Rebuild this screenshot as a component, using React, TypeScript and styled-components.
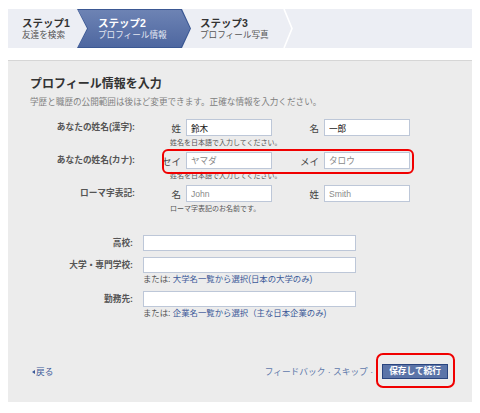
import styled, { createGlobalStyle } from "styled-components";

const GlobalStyle = createGlobalStyle`
  body {
    margin: 8px;
    background: #ffffff;
    font-family: "Liberation Sans", "Noto Sans CJK JP", sans-serif;
    color: #333;
  }
`;

const steps = [
  { title: "ステップ1", sub: "友達を検索" },
  { title: "ステップ2", sub: "プロフィール情報" },
  { title: "ステップ3", sub: "プロフィール写真" },
];

export default function App() {
  return (
    <>
      <GlobalStyle />
      <StepBar>
        <Step $width={69} $pad={14}>
          <StepTitle>{steps[0].title}</StepTitle>
          <StepSub>{steps[0].sub}</StepSub>
        </Step>
        <ActiveStep>
          <ActiveInner>
            <StepTitle $active>{steps[1].title}</StepTitle>
            <StepSub $active>{steps[1].sub}</StepSub>
          </ActiveInner>
        </ActiveStep>
        <Step $width={92} $pad={9}>
          <StepTitle>{steps[2].title}</StepTitle>
          <StepSub>{steps[2].sub}</StepSub>
        </Step>
        <Chevron width="10" height="39" viewBox="0 0 10 39">
          <polyline points="1,0 9,19.5 1,39" fill="none" stroke="#ffffff" strokeWidth="1.6" />
        </Chevron>
      </StepBar>

      <Panel>
        <Heading>プロフィール情報を入力</Heading>
        <Intro>学歴と職歴の公開範囲は後ほど変更できます。正確な情報を入力ください。</Intro>

        <NameSection>
          <NameRow>
            <Label>あなたの姓名(漢字):</Label>
            <Pairs>
              <Pair>
                <SubLabel>姓</SubLabel>
                <Input defaultValue="鈴木" />
              </Pair>
              <Pair>
                <SubLabel>名</SubLabel>
                <Input defaultValue="一郎" />
              </Pair>
            </Pairs>
            <SmallHint>姓名を日本語で入力してください。</SmallHint>
          </NameRow>

          <NameRow>
            <Label>あなたの姓名(カナ):</Label>
            <Pairs $highlight>
              <Pair>
                <SubLabel>セイ</SubLabel>
                <Input placeholder="ヤマダ" />
              </Pair>
              <Pair>
                <SubLabel>メイ</SubLabel>
                <Input placeholder="タロウ" />
              </Pair>
            </Pairs>
            <SmallHint>姓名を日本語で入力してください。</SmallHint>
          </NameRow>

          <NameRow>
            <Label>ローマ字表記:</Label>
            <Pairs>
              <Pair>
                <SubLabel>名</SubLabel>
                <Input placeholder="John" />
              </Pair>
              <Pair>
                <SubLabel>姓</SubLabel>
                <Input placeholder="Smith" />
              </Pair>
            </Pairs>
            <SmallHint>ローマ字表記のお名前です。</SmallHint>
          </NameRow>
        </NameSection>

        <SchoolSection>
          <SchoolRow>
            <Label>高校:</Label>
            <Input $wide />
          </SchoolRow>
          <SchoolRow>
            <Label>大学・専門学校:</Label>
            <Input $wide />
            <Hint>
              または: <Link>大学名一覧から選択(日本の大学のみ)</Link>
            </Hint>
          </SchoolRow>
          <SchoolRow>
            <Label>勤務先:</Label>
            <Input $wide />
            <Hint>
              または: <Link>企業名一覧から選択（主な日本企業のみ)</Link>
            </Hint>
          </SchoolRow>
        </SchoolSection>

        <Footer>
          <BackLink>
            <Arrow />
            戻る
          </BackLink>
          <FooterRight>
            <MutedLink>フィードバック · スキップ ·</MutedLink>
            <ButtonWrap>
              <SaveButton>保存して続行</SaveButton>
            </ButtonWrap>
          </FooterRight>
        </Footer>
      </Panel>
    </>
  );
}

const StepBar = styled.div`
  margin-top: 1px;
  height: 39px;
  background: #eceef4;
  display: flex;
  align-items: stretch;
`;

const Step = styled.div<{ $width: number; $pad: number }>`
  width: ${(p) => p.$width}px;
  padding-left: ${(p) => p.$pad}px;
  box-sizing: border-box;
  display: flex;
  flex-direction: column;
  justify-content: center;
  flex-shrink: 0;
`;

const ActiveStep = styled.div`
  width: 114px;
  flex-shrink: 0;
  padding: 1px;
  box-sizing: border-box;
  background: #3b5893;
  clip-path: polygon(0 0, calc(100% - 9px) 0, 100% 50%, calc(100% - 9px) 100%, 0 100%, 10px 50%);
  display: flex;
`;

const ActiveInner = styled.div`
  flex: 1;
  padding-left: 20px;
  background: linear-gradient(#6d83b4, #4e67a0);
  clip-path: polygon(0 0, calc(100% - 9px) 0, 100% 50%, calc(100% - 9px) 100%, 0 100%, 10px 50%);
  display: flex;
  flex-direction: column;
  justify-content: center;
`;

const StepTitle = styled.div<{ $active?: boolean }>`
  font-size: 10.5px;
  font-weight: 700;
  line-height: 13px;
  color: ${(p) => (p.$active ? "#ffffff" : "#333333")};
  white-space: nowrap;
`;

const StepSub = styled.div<{ $active?: boolean }>`
  font-size: 8.6px;
  line-height: 11px;
  color: ${(p) => (p.$active ? "#e4e8f2" : "#555555")};
  white-space: nowrap;
`;

const Chevron = styled.svg`
  display: block;
  flex-shrink: 0;
`;

const Panel = styled.div`
  margin-top: 12px;
  height: 342px;
  box-sizing: border-box;
  background: #ececec;
  border-top: 1px solid #d6d6d6;
  padding: 16px 22px 23px 22px;
  display: flex;
  flex-direction: column;
`;

const Heading = styled.div`
  font-size: 12px;
  font-weight: 700;
  line-height: 14px;
  color: #333;
`;

const Intro = styled.div`
  margin-top: 6px;
  font-size: 8.6px;
  line-height: 11px;
  color: #808080;
`;

const NameSection = styled.div`
  margin-top: 11px;
  display: flex;
  flex-direction: column;
  gap: 5px;
`;

const NameRow = styled.div`
  display: grid;
  grid-template-columns: 105px auto;
  column-gap: 8px;
  align-items: center;
  justify-content: start;
`;

const Label = styled.div`
  font-size: 8.7px;
  font-weight: 700;
  line-height: 11px;
  color: #555;
  text-align: right;
  white-space: nowrap;
`;

const Pairs = styled.div<{ $highlight?: boolean }>`
  position: relative;
  display: flex;
  gap: 9px;

  &::after {
    content: "";
    display: ${(p) => (p.$highlight ? "block" : "none")};
    position: absolute;
    left: 19px;
    right: -4px;
    top: -3px;
    bottom: -5px;
    border: 2px solid #f00000;
    border-radius: 6px;
    pointer-events: none;
  }
`;

const Pair = styled.div`
  display: flex;
  align-items: center;
  gap: 5px;
`;

const SubLabel = styled.span`
  width: 38px;
  text-align: right;
  font-size: 9.5px;
  color: #444;
  white-space: nowrap;
`;

const Input = styled.input<{ $wide?: boolean }>`
  width: ${(p) => (p.$wide ? 213 : 86)}px;
  height: ${(p) => (p.$wide ? 16 : 17)}px;
  box-sizing: border-box;
  border: 1px solid #bdc7d8;
  background: #ffffff;
  padding: 0 4px;
  font-family: "Liberation Sans", "Noto Sans CJK JP", sans-serif;
  font-size: 8.6px;
  color: #111;
  outline: none;

  &::placeholder {
    color: #8a8a8a;
  }
`;

const SmallHint = styled.div`
  grid-column: 2;
  margin: 2px 0 0 27px;
  font-size: 7px;
  line-height: 9px;
  color: #555;
  white-space: nowrap;
`;

const SchoolSection = styled.div`
  margin-top: 22px;
  display: flex;
  flex-direction: column;
  gap: 6px;
`;

const SchoolRow = styled.div`
  display: grid;
  grid-template-columns: 103px 213px;
  column-gap: 10px;
  align-items: center;
`;

const Hint = styled.div`
  grid-column: 2;
  margin-top: 1px;
  font-size: 8.4px;
  line-height: 11px;
  color: #555;
  white-space: nowrap;
`;

const Link = styled.span`
  color: #3b5998;
`;

const Footer = styled.div`
  margin-top: auto;
  margin-right: 2px;
  display: flex;
  align-items: center;
  justify-content: space-between;
`;

const BackLink = styled.span`
  margin-left: 2px;
  display: flex;
  align-items: center;
  gap: 1px;
  font-size: 8.7px;
  color: #3b5998;
`;

const Arrow = styled.span`
  width: 0;
  height: 0;
  border-top: 2.5px solid transparent;
  border-bottom: 2.5px solid transparent;
  border-right: 3px solid #3b5998;
`;

const FooterRight = styled.div`
  display: flex;
  align-items: center;
  gap: 9px;
`;

const MutedLink = styled.span`
  font-size: 8.7px;
  color: #6079ab;
  white-space: nowrap;
`;

const ButtonWrap = styled.div`
  position: relative;
  display: flex;

  &::after {
    content: "";
    position: absolute;
    left: -6px;
    right: -7px;
    top: -11px;
    bottom: -9px;
    border: 2px solid #f00000;
    border-radius: 7px;
    pointer-events: none;
  }
`;

const SaveButton = styled.button`
  height: 15px;
  padding: 0 6px;
  border: 1px solid #29447e;
  background: #5b74a8;
  color: #ffffff;
  font-family: "Liberation Sans", "Noto Sans CJK JP", sans-serif;
  font-size: 8.7px;
  font-weight: 700;
  line-height: 13px;
  cursor: pointer;
`;
